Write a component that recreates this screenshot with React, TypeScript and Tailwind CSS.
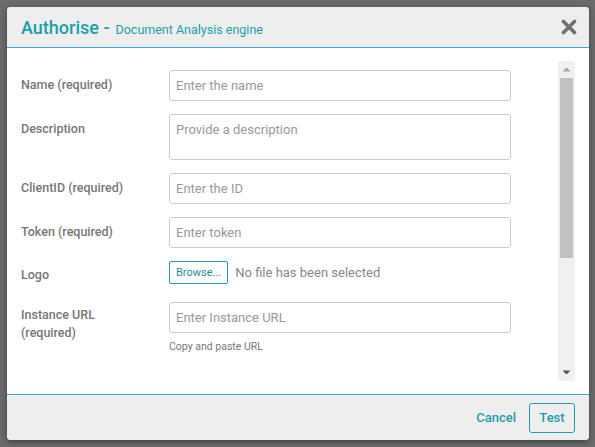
import React from 'react'

const fields = [
  { label: 'Name (required)', placeholder: 'Enter the name' },
  { label: 'Description', placeholder: 'Provide a description', area: true },
  { label: 'ClientID (required)', placeholder: 'Enter the ID' },
  { label: 'Token (required)', placeholder: 'Enter token' },
]

export default function App() {
  return (
    <div
      className="w-[595px] h-[447px] bg-[#6b6b6b] p-[7px] overflow-hidden"
      style={{ fontFamily: 'Roboto, "Open Sans", sans-serif' }}
    >
      <div className="h-[433px] w-[582px] flex flex-col bg-white rounded-[4px] overflow-hidden shadow-[0_2px_6px_rgba(0,0,0,0.4)]">
        {/* Header */}
        <div className="h-[41px] shrink-0 bg-[#eeeeee] border-b border-[#3ba6d8] flex items-center justify-between pl-[14px] pr-[12px]">
          <h1 className="flex items-baseline text-[#1c9fad]">
            <span className="text-[18px] font-medium">Authorise -</span>
            <span className="text-[12.5px] ml-[6px]">Document Analysis engine</span>
          </h1>
          <svg width="16" height="16" viewBox="0 0 16 16" className="mt-[-1px]">
            <path d="M2.5 2.5 L13.5 13.5 M13.5 2.5 L2.5 13.5" stroke="#707070" strokeWidth="3.6" strokeLinecap="round" />
          </svg>
        </div>

        {/* Body */}
        <div className="flex-1 flex pr-[14px]">
          <div className="flex-1 pl-[14px] pt-[22px]">
            {fields.map((f) => (
              <div key={f.label} className="flex mb-[13px]">
                <label className="w-[148px] shrink-0 text-[12.5px] font-medium text-[#777] pt-[6px]">
                  {f.label}
                </label>
                {f.area ? (
                  <div className="w-[342px] h-[46px] border border-[#cccccc] rounded-[3px] px-[6px] pt-[5px] text-[13px] text-[#999]">
                    {f.placeholder}
                  </div>
                ) : (
                  <div className="w-[342px] h-[31px] border border-[#cccccc] rounded-[3px] px-[6px] flex items-center text-[13px] text-[#999]">
                    {f.placeholder}
                  </div>
                )}
              </div>
            ))}
            <div className="flex items-center mt-[2px] mb-[17px]">
              <label className="w-[148px] shrink-0 text-[12.5px] font-medium text-[#777] pt-[5px]">Logo</label>
              <div className="h-[23px] px-[6px] border border-[#1c9fad] rounded-[2px] flex items-center text-[11px] text-[#1a8f9c]">
                Browse...
              </div>
              <span className="ml-[7px] text-[13px] text-[#888]">No file has been selected</span>
            </div>
            <div className="flex">
              <label className="w-[148px] shrink-0 text-[12.5px] font-medium text-[#777] leading-[18px] pt-[4px]">
                Instance URL
                <br />
                (required)
              </label>
              <div>
                <div className="w-[342px] h-[31px] border border-[#cccccc] rounded-[3px] px-[6px] flex items-center text-[13px] text-[#999]">
                  Enter Instance URL
                </div>
                <p className="mt-[6px] text-[10.5px] text-[#777]">Copy and paste URL</p>
              </div>
            </div>
          </div>

          {/* Scrollbar */}
          <div className="w-[17px] my-[13px] bg-[#f0f0f0] flex flex-col items-center">
            <svg width="9" height="5" viewBox="0 0 9 5" className="mt-[6px]">
              <path d="M0.5 4.5 L4.5 0.5 L8.5 4.5 Z" fill="#a3a3a3" />
            </svg>
            <div className="w-[13px] h-[180px] bg-[#c1c1c1] mt-[6px]" />
            <div className="flex-1" />
            <svg width="9" height="5" viewBox="0 0 9 5" className="mb-[6px]">
              <path d="M0.5 0.5 L8.5 0.5 L4.5 4.5 Z" fill="#505050" />
            </svg>
          </div>
        </div>

        {/* Footer */}
        <div className="h-[46px] shrink-0 bg-[#eeeeee] border-t border-[#3ba6d8] flex items-center justify-end pr-[14px]">
          <span className="text-[13px] font-medium text-[#1c9fad] mr-[13px]">Cancel</span>
          <div className="h-[30px] w-[46px] border border-[#1c9fad] rounded-[3px] flex items-center justify-center text-[13px] font-medium text-[#1c9fad]">
            Test
          </div>
        </div>
      </div>
    </div>
  )
}
